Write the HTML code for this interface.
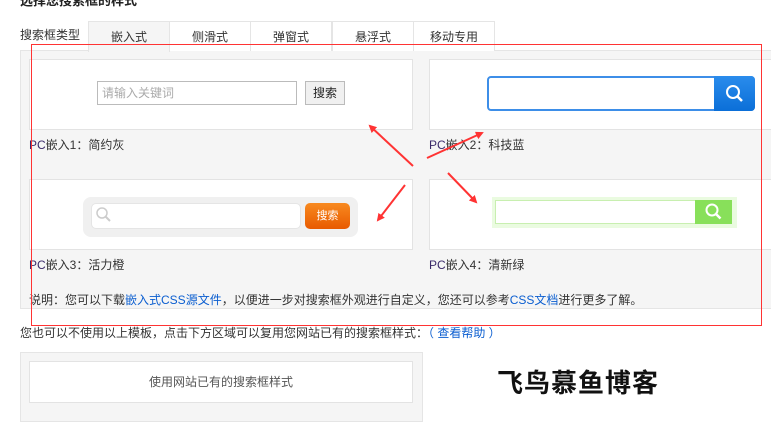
<!DOCTYPE html>
<html><head><meta charset="utf-8"><style>
*{margin:0;padding:0;box-sizing:border-box}
body{width:771px;height:409px;overflow:hidden;background:#fff;position:relative;font:12px "Liberation Sans","Noto Sans CJK SC",sans-serif;color:#333}
.a{position:absolute}
.tab{position:absolute;top:21px;height:30px;width:82px;border:1px solid #e5e5e5;border-bottom:none;background:#fff;text-align:center;line-height:30px;font-size:12px;color:#333}
.box{position:absolute;background:#fff;border:1px solid #e3e3e3}
.lbl{position:absolute;font-size:12px;color:#333}
.lbl b{font-weight:normal;color:#3a2a6a}
a{color:#0b5ed0;text-decoration:none}
</style></head><body>
<div class="a" style="left:20px;top:-10px;font-weight:bold;font-size:13px;color:#222">选择您搜索框的样式</div>
<div class="a" style="left:20px;top:26px">搜索框类型</div>
<div class="a" style="left:20px;top:50px;width:760px;height:259px;background:#f5f5f5;border:1px solid #e5e5e5"></div>
<div class="tab" style="left:88px;background:#f5f5f5;height:31px">嵌入式</div>
<div class="tab" style="left:169px">侧滑式</div>
<div class="tab" style="left:250px">弹窗式</div>
<div class="tab" style="left:332px">悬浮式</div>
<div class="tab" style="left:413px">移动专用</div>

<div class="box" style="left:29px;top:59px;width:384px;height:71px"></div>
<div class="a" style="left:97px;top:81px;width:200px;height:24px;border:1px solid #bbb;background:#fff;color:#aaa;line-height:22px;padding-left:4px">请输入关键词</div>
<div class="a" style="left:305px;top:81px;width:40px;height:24px;border:1px solid #bbb;background:#f0f0f0;text-align:center;line-height:22px;color:#222">搜索</div>
<div class="lbl" style="left:29px;top:136px"><b>PC</b>嵌入1：简约灰</div>

<div class="box" style="left:429px;top:59px;width:360px;height:71px"></div>
<div class="a" style="left:487px;top:76px;width:268px;height:35px;border:2px solid #3d8ee8;border-radius:4px;background:#fff"></div>
<div class="a" style="left:714px;top:76px;width:41px;height:35px;background:linear-gradient(#2a8cec,#0b6fd8);border-radius:0 4px 4px 0"></div>
<svg class="a" style="left:724px;top:83px" width="22" height="22"><circle cx="9" cy="9" r="6" fill="none" stroke="#fff" stroke-width="2"/><line x1="13" y1="13" x2="18" y2="18" stroke="#fff" stroke-width="2.5"/></svg>
<div class="lbl" style="left:429px;top:136px"><b>PC</b>嵌入2：科技蓝</div>

<div class="box" style="left:29px;top:179px;width:384px;height:71px"></div>
<div class="a" style="left:83px;top:197px;width:275px;height:40px;background:#f0f0f0;border-radius:8px"></div>
<div class="a" style="left:91px;top:203px;width:210px;height:26px;background:#fff;border:1px solid #e5e5e5;border-radius:5px"></div>
<svg class="a" style="left:95px;top:206px" width="18" height="18"><circle cx="7" cy="7" r="5" fill="none" stroke="#ccc" stroke-width="1.5"/><line x1="10.5" y1="10.5" x2="15" y2="15" stroke="#ccc" stroke-width="2"/></svg>
<div class="a" style="left:305px;top:203px;width:45px;height:26px;background:linear-gradient(#f88a20,#e85a00);border-radius:5px;color:#fff;text-align:center;line-height:26px;font-size:11px">搜索</div>
<div class="lbl" style="left:29px;top:256px"><b>PC</b>嵌入3：活力橙</div>

<div class="box" style="left:429px;top:179px;width:360px;height:71px"></div>
<div class="a" style="left:492px;top:197px;width:245px;height:31px;background:#eafbe0"></div>
<div class="a" style="left:495px;top:200px;width:201px;height:24px;background:#fff;border:1px solid #c8efb0"></div>
<div class="a" style="left:695px;top:200px;width:37px;height:24px;background:#88e05a"></div>
<svg class="a" style="left:704px;top:202px" width="20" height="20"><circle cx="8" cy="8" r="5.5" fill="none" stroke="#fff" stroke-width="2"/><line x1="12" y1="12" x2="16.5" y2="16.5" stroke="#fff" stroke-width="2.5"/></svg>
<div class="lbl" style="left:429px;top:256px"><b>PC</b>嵌入4：清新绿</div>

<div class="a" style="left:29px;top:291px">说明：您可以下载<a>嵌入式CSS源文件</a>，以便进一步对搜索框外观进行自定义，您还可以参考<a>CSS文档</a>进行更多了解。</div>
<div class="a" style="left:20px;top:324px">您也可以不使用以上模板，点击下方区域可以复用您网站已有的搜索框样式：<a>（ 查看帮助 ）</a></div>

<div class="a" style="left:20px;top:352px;width:403px;height:70px;background:#f5f5f5;border:1px solid #e5e5e5"></div>
<div class="box" style="left:29px;top:361px;width:384px;height:42px;text-align:center;line-height:40px;color:#555">使用网站已有的搜索框样式</div>
<div class="a" style="left:497px;top:363px;font-size:26px;font-weight:bold;color:#111;letter-spacing:1px">飞鸟慕鱼博客</div>

<div class="a" style="left:31px;top:44px;width:731px;height:282px;border:1px solid #ff3333"></div>
<svg class="a" style="left:0;top:0" width="771" height="409">
<defs><marker id="m" markerWidth="8" markerHeight="8" refX="6" refY="4" orient="auto" markerUnits="userSpaceOnUse"><path d="M0,0 L8,4 L0,8 Z" fill="#ff3333"/></marker></defs>
<g stroke="#ff3333" stroke-width="2" fill="none">
<line x1="413" y1="166" x2="370" y2="126" marker-end="url(#m)"/>
<line x1="427" y1="158" x2="482" y2="133" marker-end="url(#m)"/>
<line x1="405" y1="185" x2="378" y2="220" marker-end="url(#m)"/>
<line x1="448" y1="173" x2="476" y2="202" marker-end="url(#m)"/>
</g></svg>
</body></html>
